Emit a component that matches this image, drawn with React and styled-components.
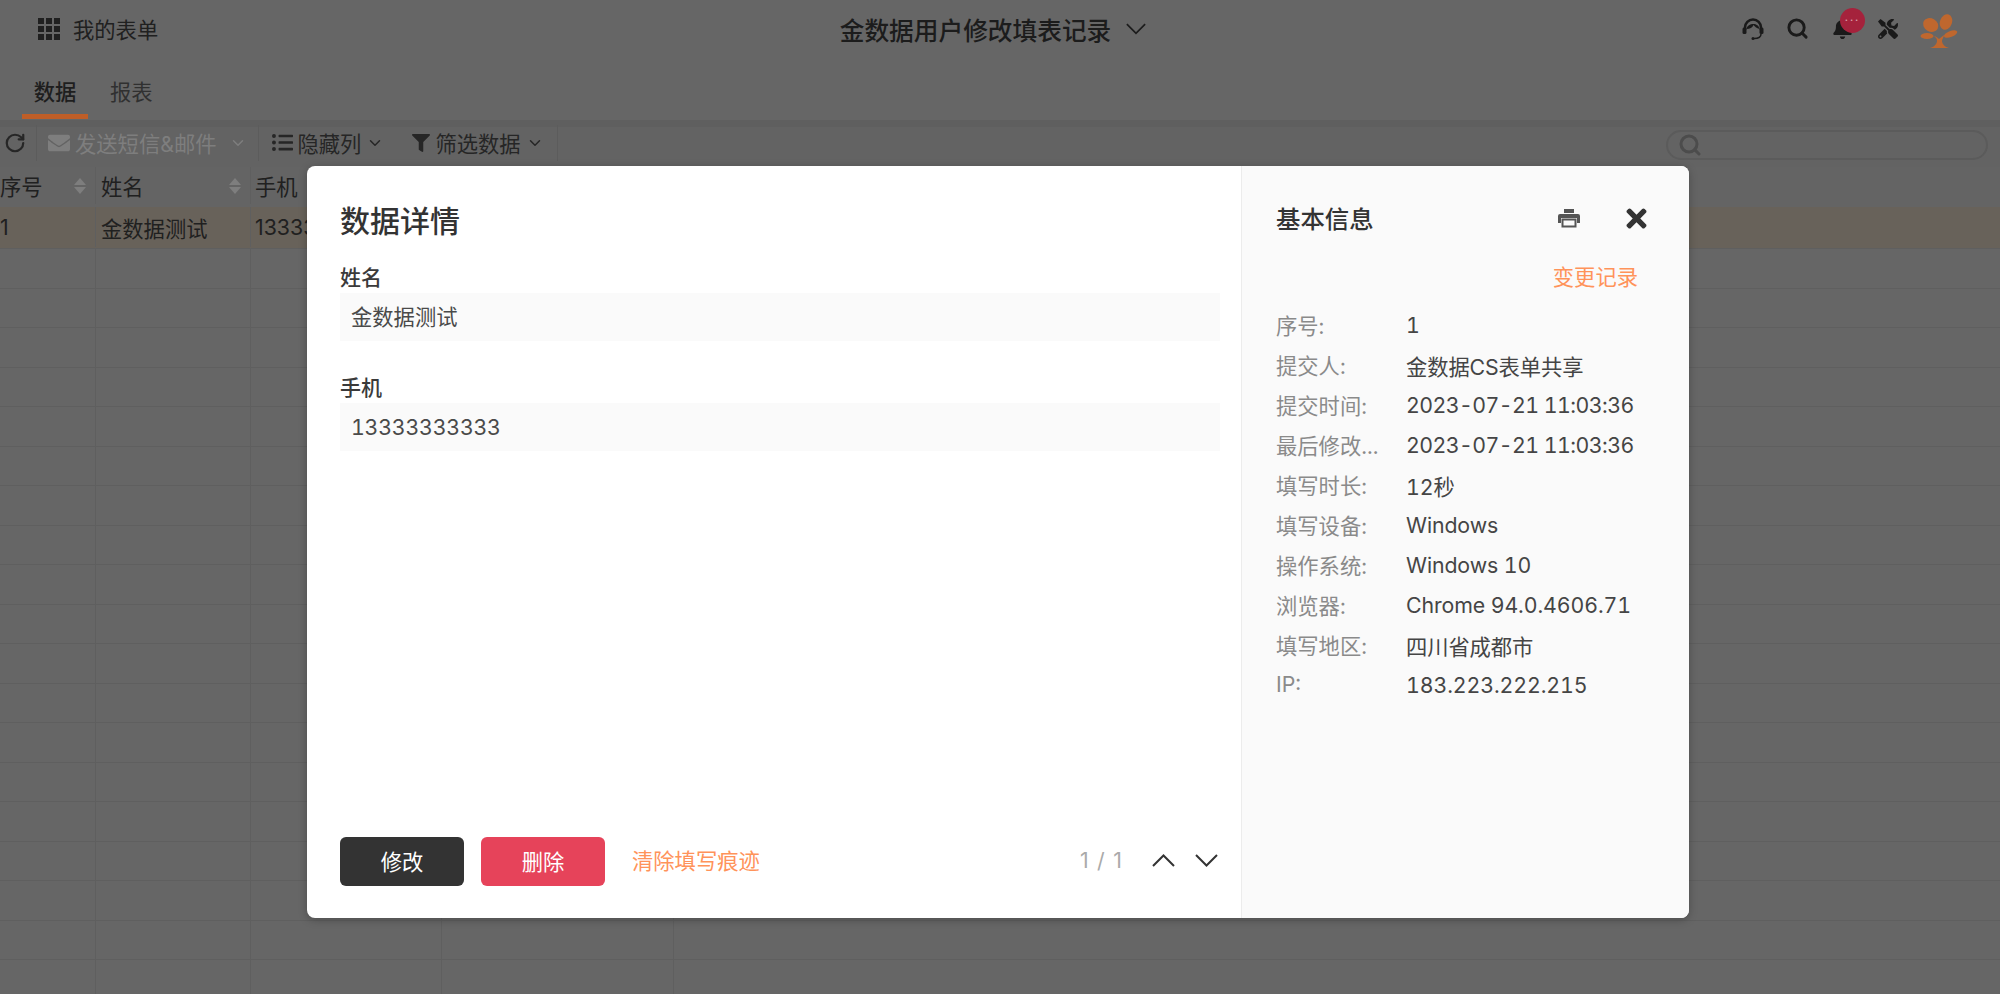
import React from 'react'
import styled, { createGlobalStyle } from 'styled-components'
import { FaBell, FaEnvelope, FaFilter, FaListUl, FaTimes, FaTools } from 'react-icons/fa'
import { ChevronDown, RotateCw, Search } from 'lucide-react'

const GlobalStyle = createGlobalStyle`
	html, body {
		margin: 0;
		height: 994px;
		overflow: hidden;
		background: #666;
		font-family: "Inter", "Noto Sans CJK SC", sans-serif;
		font-variant-numeric: tabular-nums;
	}
	* { box-sizing: border-box; }
`

const Page = styled.div`
	position: relative;
	width: 2000px;
	height: 994px;
	overflow: hidden;
	background: #666;
	color: #222;
`

const TopBar = styled.div`
	display: grid;
	grid-template-columns: 1fr auto 1fr;
	align-items: center;
	height: 60px;
	padding: 0 30px 3px 38px;
`

const Brand = styled.div`
	display: flex;
	align-items: center;
	gap: 13px;
	font-size: 21.3px;
	color: #202020;
`

const GridIcon = styled.div`
	display: grid;
	grid-template-columns: repeat(3, 6px);
	grid-auto-rows: 6px;
	gap: 2px;
	span { background: #202020; }
`

const FormTitle = styled.div`
	display: flex;
	align-items: center;
	gap: 15px;
	font-size: 24.7px;
	font-weight: 500;
	color: #1c1c1c;
	transform: translateX(-11px);
`

const TopIcons = styled.div`
	display: flex;
	align-items: center;
	justify-content: flex-end;
	color: #1a1a1a;
`

const IconSlot = styled.div`
	position: relative;
	display: flex;
	justify-content: center;
	width: ${p => p.$w || 45}px;
`

const Badge = styled.div`
	position: absolute;
	top: -10px;
	left: 20px;
	width: 25px;
	height: 25px;
	border-radius: 50%;
	background: #a5223c;
	color: #d8a0aa;
	font-size: 12px;
	line-height: 18px;
	text-align: center;
	letter-spacing: 2px;
`

const Tabs = styled.div`
	display: flex;
	gap: 22px;
	height: 60px;
	padding: 0 22px;
`

const Tab = styled.div`
	display: flex;
	align-items: flex-start;
	justify-content: center;
	width: ${p => (p.$active ? '66px' : 'auto')};
	height: 59px;
	padding-top: 15px;
	font-size: 21.3px;
	font-weight: ${p => (p.$active ? 500 : 400)};
	color: ${p => (p.$active ? '#1e1e1e' : '#303030')};
	border-bottom: 5px solid ${p => (p.$active ? '#bf5e28' : 'transparent')};
`

const Toolbar = styled.div`
	display: flex;
	align-items: center;
	height: 47px;
	border-top: 7px solid #5f5f5f;
	background: #636363;
	padding: 0 12px 9px 4px;
`

const ToolGroup = styled.div`
	display: flex;
	align-items: center;
	height: 36px;
	width: ${p => (p.$w ? `${p.$w}px` : 'auto')};
	padding: 0 ${p => p.$pad || 0}px;
	border-right: 1px solid #5c5c5c;
	gap: ${p => p.$gap || 0}px;
	color: ${p => (p.$disabled ? '#7e7e7e' : '#262626')};
	font-size: 21.3px;
`

const ToolButton = styled.div`
	display: flex;
	align-items: center;
	gap: 5px;
`

const SearchBox = styled.div`
	display: flex;
	align-items: center;
	width: 322px;
	height: 30px;
	margin: 4px 0 0 auto;
	padding-left: 10px;
	border: 2px solid #5b5b5b;
	border-radius: 15px;
	color: #4c4c4c;
`

const Row = styled.div`
	display: flex;
	height: ${p => (p.$head ? 40 : p.$tint ? 41 : 39.5)}px;
	padding-bottom: ${p => (p.$head ? 3 : p.$tint ? 1 : 0)}px;
	background: ${p => (p.$head ? '#646464' : p.$tint ? '#68625a' : 'transparent')};
	box-shadow: 0 1px 0 ${p => (p.$head ? '#616161' : '#5f5f5f')};
`

const Cell = styled.div`
	display: flex;
	align-items: center;
	flex: ${p => (p.$w ? `0 0 ${p.$w}px` : '1')};
	padding-left: ${p => p.$pl ?? 5}px;
	padding-right: 9px;
	border-right: ${p => (p.$w ? '1px solid #5f5f5f' : 'none')};
	font-size: 21.3px;
	font-variant-numeric: normal;
	color: #202020;
	overflow: hidden;
	white-space: nowrap;
`

const SortMark = styled.span`
	display: flex;
	flex-direction: column;
	gap: 2px;
	margin-left: auto;
	&::before, &::after {
		content: '';
		width: 0;
		height: 0;
		border-left: 6px solid transparent;
		border-right: 6px solid transparent;
	}
	&::before { border-bottom: 7px solid #7e7e7e; }
	&::after { border-top: 7px solid #7e7e7e; }
`

const Modal = styled.div`
	position: absolute;
	top: 166px;
	left: 307px;
	display: flex;
	width: 1382px;
	height: 752px;
	border-radius: 8px;
	background: #fff;
	overflow: hidden;
	box-shadow: 0 2px 8px rgba(0, 0, 0, 0.25);
`

const MainPane = styled.div`
	display: flex;
	flex-direction: column;
	flex: 1;
	padding: 31px 21px 32px 33px;
`

const DetailTitle = styled.h2`
	margin: 0 0 18px;
	font-size: 30px;
	line-height: 48px;
	font-weight: 500;
	color: #333;
`

const Field = styled.div`
	margin-bottom: 32px;
`

const FieldLabel = styled.div`
	font-size: 21px;
	line-height: 30px;
	font-weight: 500;
	color: #3a3a3a;
`

const FieldValue = styled.div`
	display: flex;
	align-items: center;
	height: 48px;
	padding: 0 0 ${p => (p.$cjk ? 4 : 0)}px 11px;
	background: #fafafa;
	font-size: 21.3px;
	letter-spacing: ${p => (p.$cjk ? 0 : '-0.2px')};
	color: #4a4a4a;
`

const Footer = styled.div`
	display: flex;
	align-items: center;
	margin-top: auto;
`

const Button = styled.div`
	display: flex;
	align-items: center;
	justify-content: center;
	width: 124px;
	height: 49px;
	margin-right: 17px;
	padding-bottom: 3px;
	border-radius: 6px;
	background: ${p => (p.$danger ? '#e6435a' : '#333')};
	color: #fff;
	font-size: 21.3px;
`

const Link = styled.div`
	font-size: 21.3px;
	color: #ff935a;
`

const ClearLink = styled(Link)`
	margin: 0 0 5px 10px;
`

const Pager = styled.div`
	display: flex;
	align-items: center;
	gap: 20px;
	margin: 0 2px 3px auto;
	color: #333;
`

const PageCount = styled.span`
	margin-right: 9px;
	font-size: 21.3px;
	font-variant-numeric: normal;
	letter-spacing: 1.2px;
	color: #aaa;
`

const SidePane = styled.div`
	display: flex;
	flex-direction: column;
	flex: 0 0 448px;
	padding: 35px 38px 0 34px;
	background: #fafafa;
	border-left: 1px solid #ececec;
`

const SideHead = styled.div`
	display: flex;
	align-items: center;
	height: 32px;
`

const SideTitle = styled.div`
	font-size: 24.4px;
	font-weight: 500;
	color: #333;
`

const SideActions = styled.div`
	display: flex;
	align-items: center;
	gap: 42px;
	margin: 2px 0 0 auto;
	color: #333;
`

const SideLink = styled(Link)`
	align-self: flex-end;
	margin: 28px 13px 0 0;
	line-height: 32px;
`

const InfoList = styled.div`
	margin-top: 13px;
`

const InfoRow = styled.div`
	display: flex;
	align-items: center;
	height: 40px;
	font-size: 21.3px;
`

const InfoLabel = styled.span`
	flex: 0 0 130px;
	margin-bottom: 4px;
	color: #8a8a8a;
`

const InfoValue = styled.span`
	margin-bottom: 2px;
	color: #454545;
	letter-spacing: ${p => (p.$date ? '-0.55px' : '-0.1px')};
`

const info = [
	['序号:', '1'],
	['提交人:', '金数据CS表单共享'],
	['提交时间:', '2023-07-21 11:03:36', true],
	['最后修改...', '2023-07-21 11:03:36', true],
	['填写时长:', '12秒'],
	['填写设备:', 'Windows'],
	['操作系统:', 'Windows 10'],
	['浏览器:', 'Chrome 94.0.4606.71'],
	['填写地区:', '四川省成都市'],
	['IP:', '183.223.222.215'],
]

const Chevron = ({ up, width = 23, height = 13 }) => (
	<svg width={width} height={height} viewBox="0 0 23 13" fill="none" stroke="currentColor" strokeWidth="2">
		<path d={up ? 'M1 12L11.500 1.500 22 12' : 'M1 1l10.500 10.500L22 1'} />
	</svg>
)

const Headset = () => (
	<svg width="24" height="24" viewBox="0 0 24 24" fill="none" stroke="#1a1a1a">
		<path d="M4 13v-2.500a8 8 0 0 1 16 0V13" strokeWidth="2.600" />
		<path d="M5.500 12c1-6 12-7 13 0-3-1-5-2.500-6-4-1 2.500-3.500 4-7 4z" fill="#1a1a1a" stroke="none" />
		<rect x="1.500" y="10.500" width="4" height="6.500" rx="1.500" fill="#1a1a1a" stroke="none" />
		<rect x="18.500" y="10.500" width="4" height="6.500" rx="1.500" fill="#1a1a1a" stroke="none" />
		<path d="M20 17c0 3-3 4.500-7 4.500" strokeWidth="1.500" />
		<circle cx="12" cy="21.500" r="1.500" fill="#1a1a1a" stroke="none" />
	</svg>
)

const Logo = () => (
	<svg width="40" height="36" viewBox="0 0 40 36" fill="#bf672e" style={{ margin: '2px 0 -4px' }}>
		<ellipse cx="10.700" cy="11" rx="8" ry="6.500" transform="rotate(30 10.700 11)" />
		<ellipse cx="26" cy="8" rx="6" ry="8" transform="rotate(20 26 8)" />
		<ellipse cx="7" cy="22" rx="6.500" ry="3" />
		<ellipse cx="30.600" cy="20" rx="7" ry="3" transform="rotate(-20 30.600 20)" />
		<path d="M14 22c2 .5 4 2 5 3l5-4c0 2-2 4-2 6 0 3 3 6 7 7H10c4-1 7-4 7-7 0-2-1-3.500-3-5z" />
	</svg>
)

const Printer = () => (
	<svg width="22" height="19" viewBox="0 0 22 19">
		<path d="M6 0h10v4H6z" fill="#555" />
		<path d="M2 5h18a2 2 0 0 1 2 2v7h-3V9H3v5H0V7a2 2 0 0 1 2-2z" fill="#555" />
		<path d="M4.500 10.500h13v7h-13z" fill="#fafafa" stroke="#555" strokeWidth="2" />
	</svg>
)

const Grid = () => (
	<GridIcon>
		{Array.from({ length: 9 }).map((_, i) => <span key={i} />)}
	</GridIcon>
)

export default function App() {
	return (
		<Page>
			<GlobalStyle />
			<TopBar>
				<Brand><Grid />我的表单</Brand>
				<FormTitle>
					金数据用户修改填表记录
					<Chevron width={20} height={12} />
				</FormTitle>
				<TopIcons>
					<IconSlot><Headset /></IconSlot>
					<IconSlot><Search size={23} strokeWidth={3} /></IconSlot>
					<IconSlot>
						<FaBell size={21} />
						<Badge>...</Badge>
					</IconSlot>
					<IconSlot><FaTools size={20} /></IconSlot>
					<IconSlot $w={60}><Logo /></IconSlot>
				</TopIcons>
			</TopBar>
			<Tabs>
				<Tab $active>数据</Tab>
				<Tab>报表</Tab>
			</Tabs>
			<Toolbar>
				<ToolGroup $w={33}>
					<RotateCw size={22} strokeWidth={2.4} color="#262626" />
				</ToolGroup>
				<ToolGroup $disabled $pad={11} $gap={5}>
					<FaEnvelope size={22} />
					发送短信&邮件
					<ChevronDown size={18} style={{ margin: '0 0 0 7px' }} />
				</ToolGroup>
				<ToolGroup $pad={13} $gap={28}>
					<ToolButton>
						<FaListUl size={21} />
						隐藏列
						<ChevronDown size={18} />
					</ToolButton>
					<ToolButton>
						<FaFilter size={18} />
						筛选数据
						<ChevronDown size={18} />
					</ToolButton>
				</ToolGroup>
				<SearchBox><Search size={24} strokeWidth={3} /></SearchBox>
			</Toolbar>
			<Row $head>
				<Cell $w={96} $pl={0}>序号<SortMark /></Cell>
				<Cell $w={155}>姓名<SortMark /></Cell>
				<Cell $w={191} $pl={4}>手机</Cell>
				<Cell $w={232} />
				<Cell />
			</Row>
			<Row $tint>
				<Cell $w={96} $pl={0}>1</Cell>
				<Cell $w={155}>金数据测试</Cell>
				<Cell $w={191} $pl={4}>13333333333</Cell>
				<Cell $w={232} />
				<Cell />
			</Row>
			{Array.from({ length: 19 }).map((_, i) => (
				<Row key={i}>
					<Cell $w={96} />
					<Cell $w={155} />
					<Cell $w={191} />
					<Cell $w={232} />
					<Cell />
				</Row>
			))}
			<Modal>
				<MainPane>
					<DetailTitle>数据详情</DetailTitle>
					<Field>
						<FieldLabel>姓名</FieldLabel>
						<FieldValue $cjk>金数据测试</FieldValue>
					</Field>
					<Field>
						<FieldLabel>手机</FieldLabel>
						<FieldValue>13333333333</FieldValue>
					</Field>
					<Footer>
						<Button>修改</Button>
						<Button $danger>删除</Button>
						<ClearLink>清除填写痕迹</ClearLink>
						<Pager>
							<PageCount>1 / 1</PageCount>
							<Chevron up />
							<Chevron />
						</Pager>
					</Footer>
				</MainPane>
				<SidePane>
					<SideHead>
						<SideTitle>基本信息</SideTitle>
						<SideActions>
							<Printer />
							<FaTimes size={29} />
						</SideActions>
					</SideHead>
					<SideLink>变更记录</SideLink>
					<InfoList>
						{info.map(([label, value, isDate]) => (
							<InfoRow key={label}>
								<InfoLabel>{label}</InfoLabel>
								<InfoValue $date={isDate}>{value}</InfoValue>
							</InfoRow>
						))}
					</InfoList>
				</SidePane>
			</Modal>
		</Page>
	)
}
